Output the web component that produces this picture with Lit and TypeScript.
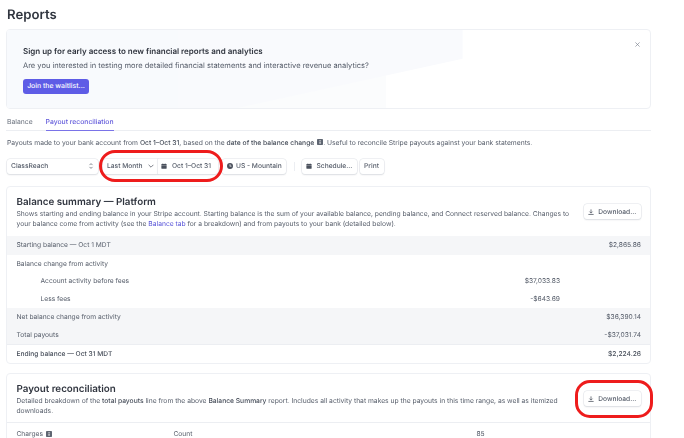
import { LitElement, html, css, svg } from "lit";
import { customElement } from "lit/decorators.js";

const cal = html`<svg class="ic" viewBox="0 0 16 16"><path fill="currentColor" d="M1 6h14v8a1 1 0 0 1-1 1H2a1 1 0 0 1-1-1zM2 2.500h2V1h2v1.500h4V1h2v1.500h2a1 1 0 0 1 1 1V5H1V3.500a1 1 0 0 1 1-1z"/></svg>`;
const clock = html`<svg class="ic" viewBox="0 0 16 16"><path fill="currentColor" fill-rule="evenodd" d="M8 0a8 8 0 1 1 0 16A8 8 0 0 1 8 0zm-1 3.500V9h5V7H9V3.500z"/></svg>`;
const dl = html`<svg class="ic" viewBox="0 0 16 16"><path fill="none" stroke="currentColor" stroke-width="2" d="M8 1v9M4 7l4 4 4-4M1 14.500h14"/></svg>`;
const info = html`<svg class="info" viewBox="0 0 8 8"><rect width="8" height="8" rx="1" fill="#5f6672"/><rect x="3.400" y="3.400" width="1.300" height="3" fill="#fff"/><rect x="3.400" y="1.500" width="1.300" height="1.200" fill="#fff"/></svg>`;

@customElement("app-root")
export class AppRoot extends LitElement {
  static styles = css`
    :host { display: block; position: relative; width: 684px; height: 438px; overflow: hidden; background: #fff; font-family: Inter, "Liberation Sans", sans-serif; font-size: 6.660px; line-height: 10px; color: #555c69; text-rendering: geometricPrecision; }
    * { box-sizing: border-box; }
    .page { width: 645px; margin-left: 6px; padding-top: 7px; display: flex; flex-direction: column; filter: blur(0.35px); }
    h1 { margin: 0 0 0 1px; font-size: 13.200px; line-height: 16px; font-weight: 600; color: #30353f; height: 22px; }
    b, strong { font-weight: 500; color: #474e5a; }
    .banner { position: relative; height: 80px; border: 1px solid #eef0f4; border-radius: 4px; padding: 16px 16px 0; overflow: hidden; background: #fff; }
    .bg { position: absolute; left: 0; top: 0; width: 100%; height: 100%; }
    .banner > :not(.bg) { position: relative; }
    .ban-title { font-size: 8px; line-height: 11px; font-weight: 600; color: #30353f; }
    .ban-text { font-size: 7.500px; line-height: 11px; margin-top: 2.500px; color: #555c69; }
    .wait { display: inline-flex; align-items: center; justify-content: center; margin-top: 8px; width: 66px; height: 15px; border-radius: 3px; background: #5e5ce6; color: #fff; font-weight: 500; font-size: 6.900px; }
    .close { position: absolute !important; right: 10px; top: 12px; width: 5px; height: 5px; color: #7c838f; }
    .tabs { display: flex; gap: 13px; height: 21.500px; padding-top: 8px; border-bottom: 1px solid #eceef2; font-size: 6.800px; }
    .tabs span { height: 13.500px; color: #6a717d; padding: 0 0 0 1px; white-space: nowrap; }
    .tabs .on { color: #635bdb; font-weight: 500; border-bottom: 1px solid #7a73e8; padding: 0; }
    .desc { margin: 7px 0 0 1px; height: 10px; white-space: nowrap; font-size: 6.740px; }
    .toolbar { display: flex; align-items: center; margin: 11px 0 0 0.500px; height: 15px; }
    .btn { display: inline-flex; align-items: center; gap: 4px; height: 15px; padding: 0 4px; border-radius: 3px; background: #fff; box-shadow: 0 0 0 0.5px #dfe2e7, 0 1px 1.500px rgba(40,50,70,.16); color: #555c69; font-weight: 500; white-space: nowrap; }
    .ic { width: 6px; height: 6px; flex: none; color: #4a505c; }
    .select { width: 91px; justify-content: space-between; padding-left: 4.500px; }
    .pair { display: flex; margin-left: 5.500px; }
    .pair .btn:first-child { width: 54.500px; border-radius: 3px 0 0 3px; justify-content: space-between; }
    .pair .btn:last-child { width: 60px; border-radius: 0 3px 3px 0; gap: 5px; padding-left: 3.500px; }
    .tz { margin-left: 4px; width: 64.500px; gap: 3.500px; padding-left: 5px; }
    .sep { width: 1px; height: 9px; background: #eceef2; margin: 0 7.500px 0 7.500px; }
    .sched { width: 54.500px; gap: 4.500px; }
    .print { margin-left: 3px; width: 24px; justify-content: center; }
    .card { border: 1px solid #eef0f4; border-radius: 4px; overflow: hidden; background: #fff; }
    .c1 { margin-top: 12.500px; height: 178px; }
    .c2 { margin-top: 9px; height: 80px; }
    .head { display: flex; justify-content: space-between; padding: 9px 9px 0 9.500px; }
    .c1 .head { height: 49px; }
    .c2 .head { height: 49px; border-bottom: 1px solid #eceef2; }
    .head .btn { margin-top: 8px; width: 57.500px; justify-content: center; }
    h2 { margin: 0; font-size: 9.800px; line-height: 13px; font-weight: 600; color: #30353f; }
    .sub { line-height: 9.500px; font-size: 6.720px; width: 556px; }
    .sub a { color: #5753d8; }
    .row { display: flex; align-items: center; justify-content: space-between; padding: 0 9px 0 9.500px; height: 17.800px; }
    .grey { background: #f5f6f8; }
    .row.first { height: 18.700px; }
    .row.in { padding-left: 33.500px; padding-right: 90px; }
    .row.end { height: 20.500px; color: #474e5a; font-weight: 500; border-top: 1px solid #eceef2; }
    .charges { display: grid; grid-template-columns: 157px 303px 1fr; padding: 6px 9.500px; }
    .info { width: 6px; height: 6px; vertical-align: -0.5px; margin-left: 1px; }
    .ring { position: absolute; border: 3px solid #ee1c1c; pointer-events: none; }
    .r1 { left: 99px; top: 150px; width: 124px; height: 32px; border-radius: 16px; }
    .r2 { left: 574.500px; top: 379.500px; width: 78px; height: 38px; border-radius: 15px; }
  `;

  render() {
    return html`
      <div class="page">
        <h1>Reports</h1>
        <section class="banner">
          <svg class="bg" viewBox="0 0 645 79" preserveAspectRatio="none">
            <path fill="#fbfcfd" d="M0 0h380v79H0z"/>
            <path fill="#f9fafd" d="M0 0h457v29L231 79H0z"/>
            <path fill="#f8fafd" d="M0 0h172v79H0z"/>
          </svg>
          <div class="ban-title">Sign up for early access to new financial reports and analytics</div>
          <div class="ban-text">Are you interested in testing more detailed financial statements and interactive revenue analytics?</div>
          <span class="wait">Join the waitlist...</span>
          <svg class="close" viewBox="0 0 6 6">${svg`<path d="M.5.500l5 5M5.500.500l-5 5" stroke="currentColor" stroke-width=".8"/>`}</svg>
        </section>
        <nav class="tabs"><span>Balance</span><span class="on">Payout reconciliation</span></nav>
        <p class="desc">Payouts made to your bank account from <b>Oct 1–Oct 31</b>, based on the <b>date of the balance change</b> ${info}. Useful to reconcile Stripe payouts against your bank statements.</p>
        <div class="toolbar">
          <span class="btn select">ClassReach
            <svg class="ic" viewBox="0 0 8 10"><path fill="none" stroke="currentColor" stroke-width="1.100" d="M1.500 3.500L4 1l2.500 2.500M1.500 6.500L4 9l2.500-2.500"/></svg></span>
          <div class="pair">
            <span class="btn">Last Month
              <svg class="ic" viewBox="0 0 10 6"><path fill="none" stroke="currentColor" stroke-width="1.200" d="M1 1l4 4 4-4"/></svg></span>
            <span class="btn">${cal}Oct 1–Oct 31</span>
          </div>
          <span class="btn tz">${clock}US - Mountain</span>
          <span class="sep"></span>
          <span class="btn sched">${cal}Schedule...</span>
          <span class="btn print">Print</span>
        </div>
        <section class="card c1">
          <div class="head">
            <div>
              <h2>Balance summary — Platform</h2>
              <div class="sub">Shows starting and ending balance in your Stripe account. Starting balance is the sum of your available balance, pending balance, and Connect reserved balance. Changes to your balance come from activity (see the <a>Balance tab</a> for a breakdown) and from payouts to your bank (detailed below).</div>
            </div>
            <span class="btn">${dl}Download...</span>
          </div>
          <div class="row grey first"><span>Starting balance — Oct 1 MDT</span><span>$2,865.86</span></div>
          <div class="row"><span>Balance change from activity</span></div>
          <div class="row in"><span>Account activity before fees</span><span>$37,033.83</span></div>
          <div class="row in"><span>Less fees</span><span>-$643.69</span></div>
          <div class="row grey"><span>Net balance change from activity</span><span>$36,390.14</span></div>
          <div class="row grey"><span>Total payouts</span><span>-$37,031.74</span></div>
          <div class="row end"><span>Ending balance — Oct 31 MDT</span><span>$2,224.26</span></div>
        </section>
        <section class="card c2">
          <div class="head">
            <div>
              <h2>Payout reconciliation</h2>
              <div class="sub">Detailed breakdown of the <b>total payouts</b> line from the above <b>Balance Summary</b> report. Includes all activity that makes up the payouts in this time range, as well as itemized downloads.</div>
            </div>
            <span class="btn">${dl}Download...</span>
          </div>
          <div class="charges"><span>Charges ${info}</span><span>Count</span><span>85</span></div>
        </section>
      </div>
      <div class="ring r1"></div>
      <div class="ring r2"></div>
    `;
  }
}
